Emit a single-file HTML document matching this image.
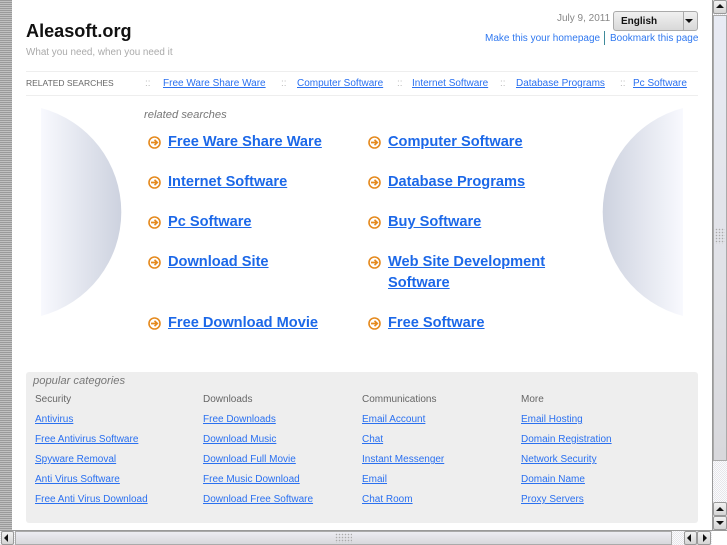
<!DOCTYPE html>
<html><head><meta charset="utf-8"><style>
html,body{margin:0;padding:0;width:727px;height:545px;overflow:hidden;background:#fff;font-family:"Liberation Sans",sans-serif}
#w{position:absolute;left:0;top:0;width:727px;height:545px;filter:blur(.35px)}
.t{position:absolute;white-space:nowrap}
.s{font-size:10px;line-height:13px;color:#2a70f0;text-decoration:underline}
.b{font-size:14.6px;line-height:21px;font-weight:bold;color:#1c68e8;text-decoration:underline}
.c{font-size:10px;line-height:13px;color:#666}
.d{font-size:10px;line-height:13px;color:#bbb}
.ic{position:absolute;width:13px;height:13px}
.btn{position:absolute;background:linear-gradient(#f2f2f2,#d4d4d4);border:1px solid #999;border-radius:2px;box-sizing:border-box}
.ar{position:absolute;width:0;height:0;border:4px solid transparent}
.chk{position:absolute;background:repeating-conic-gradient(#e6e6ea 0 25%,#fbfbfd 0 50%) 0 0/2px 2px}
</style></head><body><div id="w">
<div style="position:absolute;left:0;top:0;width:12px;height:530px;background:repeating-linear-gradient(#9a9a9a 0 1px,#c0c0c0 1px 2px)"></div>

<div class="t" style="left:26px;top:19px;font-size:18.1px;line-height:24px;font-weight:bold;color:#111">Aleasoft.org</div>
<div class="t" style="left:26px;top:46px;font-size:9.9px;line-height:13px;color:#aaa">What you need, when you need it</div>
<div class="t" style="left:557px;top:12px;font-size:10px;line-height:13px;color:#888">July 9, 2011</div>
<div style="position:absolute;left:613px;top:11px;width:85px;height:20px;border:1px solid #aaa;border-radius:3px;background:linear-gradient(#f0f0f0,#d8d8d8);box-sizing:border-box"></div>
<div class="t" style="left:621px;top:15px;font-size:10px;line-height:13px;font-weight:bold;color:#111">English</div>
<div style="position:absolute;left:683px;top:12px;width:1px;height:18px;background:#aaa"></div>
<div class="ar" style="left:685px;top:19px;border-top:4px solid #111;border-bottom:0"></div>
<div class="t" style="left:485px;top:32px;font-size:10px;line-height:13px;color:#2f78f0">Make this your homepage</div>
<div style="position:absolute;left:604px;top:31px;width:1px;height:14px;background:#3f8a9a"></div>
<div class="t" style="left:610px;top:32px;font-size:10px;line-height:13px;color:#2f78f0">Bookmark this page</div>

<div style="position:absolute;left:26px;top:71px;width:672px;height:1px;background:#eee"></div>
<div style="position:absolute;left:26px;top:95px;width:672px;height:1px;background:#eee"></div>
<div class="t" style="left:26px;top:77px;font-size:8.5px;line-height:13px;color:#666">RELATED SEARCHES</div>
<div class="t d" style="left:145px;top:77px">::</div><div class="t s" style="left:163px;top:77px">Free Ware Share Ware</div>
<div class="t d" style="left:281px;top:77px">::</div><div class="t s" style="left:297px;top:77px">Computer Software</div>
<div class="t d" style="left:397px;top:77px">::</div><div class="t s" style="left:412px;top:77px">Internet Software</div>
<div class="t d" style="left:500px;top:77px">::</div><div class="t s" style="left:516px;top:77px">Database Programs</div>
<div class="t d" style="left:620px;top:77px">::</div><div class="t s" style="left:633px;top:77px">Pc Software</div>

<svg style="position:absolute;left:0;top:100px" width="727" height="230">
<defs>
<linearGradient id="l" x1="0" x2="1" y1="0" y2="0"><stop offset="0" stop-color="#f8f9fe"/><stop offset="1" stop-color="#cdd2df"/></linearGradient>
<linearGradient id="r" x1="1" x2="0" y1="0" y2="0"><stop offset="0" stop-color="#f8f9fe"/><stop offset="1" stop-color="#cdd2df"/></linearGradient>
</defs>
<path d="M41 8A107.5 107.5 0 0 1 41 216Z" fill="url(#l)"/>
<path d="M683 8A107.5 107.5 0 0 0 683 216Z" fill="url(#r)"/>
</svg>

<div class="t" style="left:144px;top:109px;font-size:11.2px;line-height:13px;font-style:italic;color:#777">related searches</div>

<svg width="0" height="0" style="position:absolute"><defs><g id="a"><circle cx="6.5" cy="6.5" r="5.5" fill="#fff" stroke="#e58a1f" stroke-width="1.6"/><path d="M3 6.5H9M6.5 3.8L9.3 6.5L6.5 9.2" fill="none" stroke="#e58a1f" stroke-width="1.7"/></g></defs></svg>

<svg class="ic" style="left:148px;top:136px"><use href="#a"/></svg><div class="t b" style="left:168px;top:132px">Free Ware Share Ware</div>
<svg class="ic" style="left:368px;top:136px"><use href="#a"/></svg><div class="t b" style="left:388px;top:132px">Computer Software</div>
<svg class="ic" style="left:148px;top:176px"><use href="#a"/></svg><div class="t b" style="left:168px;top:172px">Internet Software</div>
<svg class="ic" style="left:368px;top:176px"><use href="#a"/></svg><div class="t b" style="left:388px;top:172px">Database Programs</div>
<svg class="ic" style="left:148px;top:216px"><use href="#a"/></svg><div class="t b" style="left:168px;top:212px">Pc Software</div>
<svg class="ic" style="left:368px;top:216px"><use href="#a"/></svg><div class="t b" style="left:388px;top:212px">Buy Software</div>
<svg class="ic" style="left:148px;top:256px"><use href="#a"/></svg><div class="t b" style="left:168px;top:252px">Download Site</div>
<svg class="ic" style="left:368px;top:256px"><use href="#a"/></svg><div class="t b" style="left:388px;top:252px">Web Site Development</div><div class="t b" style="left:388px;top:273px">Software</div>
<svg class="ic" style="left:148px;top:317px"><use href="#a"/></svg><div class="t b" style="left:168px;top:313px">Free Download Movie</div>
<svg class="ic" style="left:368px;top:317px"><use href="#a"/></svg><div class="t b" style="left:388px;top:313px">Free Software</div>

<div style="position:absolute;left:26px;top:372px;width:672px;height:151px;background:#eeeeee;border-radius:3px"></div>
<div class="t" style="left:33px;top:375px;font-size:11.2px;line-height:13px;font-style:italic;color:#777">popular categories</div>

<div class="t c" style="left:35px;top:393px">Security</div>
<div class="t s" style="left:35px;top:413px">Antivirus</div>
<div class="t s" style="left:35px;top:433px">Free Antivirus Software</div>
<div class="t s" style="left:35px;top:453px">Spyware Removal</div>
<div class="t s" style="left:35px;top:473px">Anti Virus Software</div>
<div class="t s" style="left:35px;top:493px">Free Anti Virus Download</div>

<div class="t c" style="left:203px;top:393px">Downloads</div>
<div class="t s" style="left:203px;top:413px">Free Downloads</div>
<div class="t s" style="left:203px;top:433px">Download Music</div>
<div class="t s" style="left:203px;top:453px">Download Full Movie</div>
<div class="t s" style="left:203px;top:473px">Free Music Download</div>
<div class="t s" style="left:203px;top:493px">Download Free Software</div>

<div class="t c" style="left:362px;top:393px">Communications</div>
<div class="t s" style="left:362px;top:413px">Email Account</div>
<div class="t s" style="left:362px;top:433px">Chat</div>
<div class="t s" style="left:362px;top:453px">Instant Messenger</div>
<div class="t s" style="left:362px;top:473px">Email</div>
<div class="t s" style="left:362px;top:493px">Chat Room</div>

<div class="t c" style="left:521px;top:393px">More</div>
<div class="t s" style="left:521px;top:413px">Email Hosting</div>
<div class="t s" style="left:521px;top:433px">Domain Registration</div>
<div class="t s" style="left:521px;top:453px">Network Security</div>
<div class="t s" style="left:521px;top:473px">Domain Name</div>
<div class="t s" style="left:521px;top:493px">Proxy Servers</div>

<!-- vertical scrollbar -->
<div style="position:absolute;left:712px;top:0;width:1px;height:530px;background:#999"></div>
<div class="chk" style="left:713px;top:0;width:14px;height:530px"></div>
<div class="btn" style="left:713px;top:0;width:14px;height:14px"></div>
<div class="ar" style="left:716px;top:4px;border-bottom:4px solid #111;border-top:0"></div>
<div style="position:absolute;left:713px;top:15px;width:14px;height:446px;background:linear-gradient(#e8ebf4,#e0e1e6 60%,#d8d8dc);border:1px solid #aaa;box-sizing:border-box"></div>
<div style="position:absolute;left:715px;top:228px;width:10px;height:16px;background:radial-gradient(circle,#aaa 0.6px,transparent 0.9px) 0 0/3px 3px"></div>
<div class="btn" style="left:713px;top:502px;width:14px;height:14px"></div>
<div class="ar" style="left:716px;top:507px;border-bottom:4px solid #111;border-top:0"></div>
<div class="btn" style="left:713px;top:516px;width:14px;height:14px"></div>
<div class="ar" style="left:716px;top:521px;border-top:4px solid #111;border-bottom:0"></div>

<!-- horizontal scrollbar -->
<div style="position:absolute;left:0;top:530px;width:727px;height:1px;background:#999"></div>
<div class="chk" style="left:0;top:531px;width:727px;height:14px"></div>
<div class="btn" style="left:1px;top:531px;width:13px;height:14px"></div>
<div class="ar" style="left:4px;top:534px;border-right:4px solid #111;border-left:0"></div>
<div style="position:absolute;left:15px;top:531px;width:657px;height:14px;background:linear-gradient(#ececf2,#d8d8dc);border:1px solid #aaa;box-sizing:border-box"></div>
<div style="position:absolute;left:335px;top:533px;width:17px;height:10px;background:radial-gradient(circle,#aaa 0.6px,transparent 0.9px) 0 0/3px 3px"></div>
<div class="btn" style="left:684px;top:531px;width:13px;height:14px"></div>
<div class="ar" style="left:687px;top:534px;border-right:4px solid #111;border-left:0"></div>
<div class="btn" style="left:697px;top:531px;width:14px;height:14px"></div>
<div class="ar" style="left:703px;top:534px;border-left:4px solid #111;border-right:0"></div>
<div style="position:absolute;left:712px;top:531px;width:15px;height:14px;background:#fff"></div>
</div></body></html>
